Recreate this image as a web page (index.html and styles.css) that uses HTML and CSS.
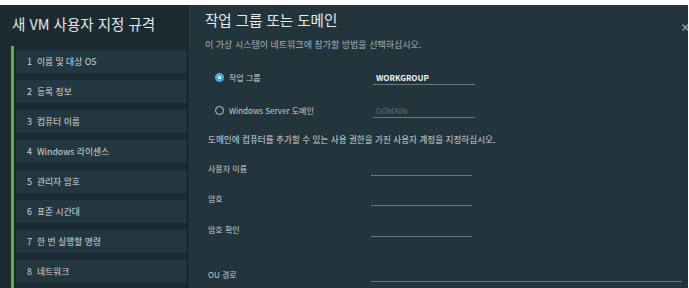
FILE: index.html
```html
<!DOCTYPE html>
<html lang="ko">
<head>
    <meta charset="UTF-8">
    <meta name="viewport" content="width=device-width, initial-scale=1.0">
    <title>새 VM 사용자 지정 규격</title>
    <link rel="stylesheet" href="styles.css">
</head>
<body>
    <div class="wizard">
        <aside class="sidebar">
            <h1 class="sidebar-title">새 VM 사용자 지정 규격</h1>
            <ol class="steps">
                <li class="step"><span class="step-num">1</span>이름 및 대상 OS</li>
                <li class="step"><span class="step-num">2</span>등록 정보</li>
                <li class="step"><span class="step-num">3</span>컴퓨터 이름</li>
                <li class="step"><span class="step-num">4</span>Windows 라이센스</li>
                <li class="step"><span class="step-num">5</span>관리자 암호</li>
                <li class="step"><span class="step-num">6</span>표준 시간대</li>
                <li class="step"><span class="step-num">7</span>한 번 실행할 명령</li>
                <li class="step"><span class="step-num">8</span>네트워크</li>
            </ol>
        </aside>

        <main class="content">
            <div class="header">
                <h2 class="page-title">작업 그룹 또는 도메인</h2>
                <button class="close-button" aria-label="닫기">
                    <svg width="7" height="7" viewBox="0 0 7 7">
                        <path d="M0.5 0.5 L6.5 6.5 M6.5 0.5 L0.5 6.5" stroke="#8ea1aa" stroke-width="1.3"/>
                    </svg>
                </button>
            </div>
            <p class="subtitle">이 가상 시스템이 네트워크에 참가할 방법을 선택하십시오.</p>

            <div class="field radio-field first">
                <label class="field-label"><span class="radio checked"></span>작업 그룹</label>
                <input class="text-input strong" type="text" value="WORKGROUP">
            </div>
            <div class="field radio-field">
                <label class="field-label"><span class="radio"></span>Windows Server 도메인</label>
                <input class="text-input" type="text" placeholder="DOMAIN">
            </div>

            <p class="description">도메인에 컴퓨터를 추가할 수 있는 사용 권한을 가진 사용자 계정을 지정하십시오.</p>

            <div class="field user-field">
                <label class="field-label">사용자 이름</label>
                <input class="text-input" type="text">
            </div>
            <div class="field user-field">
                <label class="field-label">암호</label>
                <input class="text-input" type="password">
            </div>
            <div class="field user-field confirm">
                <label class="field-label">암호 확인</label>
                <input class="text-input" type="password">
            </div>
            <div class="field user-field ou">
                <label class="field-label">OU 경로</label>
                <input class="text-input wide" type="text">
            </div>
        </main>
    </div>
</body>
</html>
```

FILE: styles.css
```css
* {
    margin: 0;
    padding: 0;
    box-sizing: border-box;
}

body {
    font-family: "Noto Sans CJK KR", "Noto Sans", sans-serif;
    background: #ffffff;
    overflow: hidden;
}

.wizard {
    display: flex;
    height: 283px;
    margin-top: 5px;
    margin-right: 1px;
    overflow: hidden;
}

/* left column */
.sidebar {
    width: 188px;
    flex-shrink: 0;
    display: flex;
    flex-direction: column;
    background: #1c2a32;
    border-right: 1px solid #141f25;
}

.sidebar-title {
    font-size: 14.5px;
    font-weight: 400;
    line-height: 20px;
    color: #e4e7e9;
    padding: 9px 0 0 12px;
    margin-bottom: 12px;
}

.steps {
    list-style: none;
    flex: 1;
    margin-left: 11px;
    padding-top: 4px;
    border-left: 3px solid #62b22f;
}

.step {
    height: 23px;
    margin: 0 0 7px 2px;
    padding-left: 11px;
    display: flex;
    align-items: center;
    font-size: 8.8px;
    color: #d3d8db;
    background: #233740;
}

.step-num {
    margin-right: 5px;
}

/* right column */
.content {
    flex: 1;
    padding: 5px 0 0 17px;
    background: #22353d;
    overflow: hidden;
}

.header {
    display: flex;
    justify-content: space-between;
    align-items: flex-start;
}

.page-title {
    font-size: 14.5px;
    font-weight: 400;
    line-height: 20px;
    color: #e8ebec;
}

.close-button {
    width: 7px;
    height: 7px;
    margin: 14px -1px 0 0;
    border: none;
    background: none;
    display: flex;
}

.subtitle {
    margin-top: 7px;
    font-size: 9px;
    line-height: 14px;
    color: #a8b3b8;
}

.field {
    display: flex;
    align-items: center;
    margin-left: 3px;
}

.field-label {
    display: flex;
    align-items: center;
    width: 163px;
    font-size: 8px;
    line-height: 14px;
    color: #c7ced1;
}

.radio-field {
    margin-top: 18px;
}

.radio-field .field-label {
    width: 165px;
    padding-left: 7px;
}

.radio {
    width: 9px;
    height: 9px;
    margin-right: 5px;
    border-radius: 50%;
    border: 1px solid #c3cbcf;
}

.radio.checked {
    border: 3px solid #49afd9;
    background: #e9f6fb;
}

.text-input {
    width: 102px;
    height: 15px;
    padding: 0 3px;
    border: none;
    border-bottom: 1px solid #67777f;
    background: transparent;
    font-family: inherit;
    font-size: 8px;
    color: #e8ebec;
    outline: none;
}

.text-input.strong {
    font-weight: 700;
    color: #f2f4f5;
}

.text-input::placeholder {
    color: #5c6d75;
}

.description {
    margin: 14px 0 0 3px;
    font-size: 8.6px;
    line-height: 14px;
    color: #d0d6d9;
}

.user-field {
    margin-top: 15px;
}

.user-field .text-input {
    width: 101px;
}

.user-field.confirm {
    margin-top: 16px;
}

.user-field.ou {
    margin-top: 30px;
}

.user-field .text-input.wide {
    width: 311px;
}
```
